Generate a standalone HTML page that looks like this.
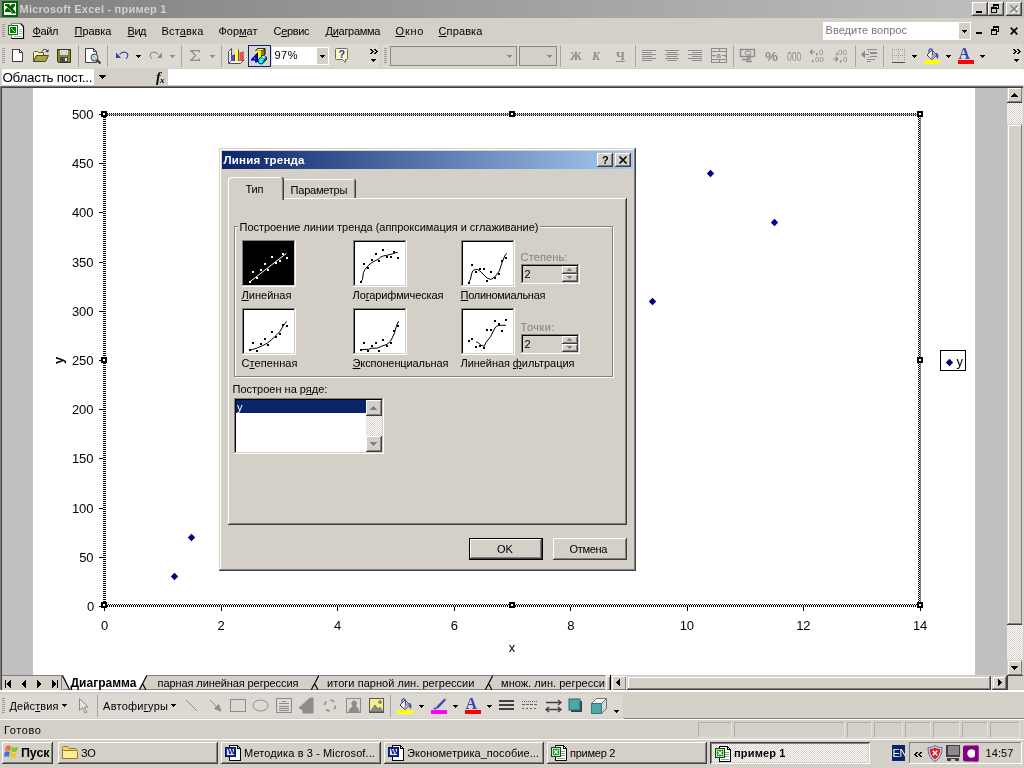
<!DOCTYPE html>
<html lang="ru">
<head>
<meta charset="utf-8">
<title>Microsoft Excel - пример 1</title>
<style>
html,body{margin:0;padding:0;width:1024px;height:768px;overflow:hidden;background:#d4d0c8;}
body{position:relative;font-family:"Liberation Sans",sans-serif;font-size:11px;color:#000;}
.a{position:absolute;box-sizing:border-box;}
.t{position:absolute;white-space:pre;line-height:1;will-change:opacity;font-family:"Liberation Sans",sans-serif;color:#000;}
.t u{text-decoration:underline;text-underline-offset:1px;text-decoration-thickness:1px;}
svg{position:absolute;overflow:visible;}
.raised{background:#d4d0c8;box-shadow:inset -1px -1px #404040,inset 1px 1px #fff,inset -2px -2px #808080,inset 2px 2px #d4d0c8;}
.raised2{background:#d4d0c8;box-shadow:inset -1px -1px #404040,inset 1px 1px #d4d0c8,inset -2px -2px #808080,inset 2px 2px #fff;}
.sunken{box-shadow:inset -1px -1px #fff,inset 1px 1px #808080,inset -2px -2px #d4d0c8,inset 2px 2px #404040;}
.sunkenb{box-shadow:inset -1px -1px #fff,inset 1px 1px #808080,inset -2px -2px #d4d0c8,inset 2px 2px #000;}
.sbv{background:#d4d0c8;box-shadow:inset -1px 0 #d4d0c8,inset 0 -1px #404040,inset 1px 1px #d4d0c8,inset -2px -2px #808080,inset 2px 2px #fff;}
.sunk1{box-shadow:inset -1px -1px #fff,inset 1px 1px #808080;}
.checker{background-color:#fff;background-image:conic-gradient(#d4d0c8 25%,#fff 0 50%,#d4d0c8 0 75%,#fff 0);background-size:2px 2px;}
.grip{background-image:linear-gradient(#a09c94 1px,transparent 1px);background-size:3px 2px;}
.sep{width:1px;background:#a6a398;}
</style>
</head>
<body>
<!-- ===== Excel title bar (inactive) ===== -->
<div class="a" style="left:0;top:0;width:1024px;height:18px;background:linear-gradient(to right,#808080,#c0c0c0);"></div>
<svg style="left:2px;top:1px" width="16" height="16" viewBox="0 0 16 16">
  <rect x="0" y="0" width="16" height="16" fill="#006400"/>
  <rect x="2" y="2" width="12" height="12" fill="#fff"/>
  <path d="M3 3 H7 L8.500 5 L10 3 H13 V5 L10.800 7.500 L13 10 V11.500 H14 V12.500 H9.500 L8.500 11 H3 V9 L5.500 6.500 L3 4.500 Z" fill="#006400"/>
  <path d="M4.300 5.300 L10.500 11.500" stroke="#fff" stroke-width="0.900" stroke-dasharray="1 0.500"/>
</svg>
<span class="t" style="left:19.56px;top:4.00px;font-size:11px;letter-spacing:0.221px;font-weight:bold;color:#d4d0c8;">Microsoft Excel - пример 1</span>
<!-- caption buttons -->
<div class="a raised" style="left:972px;top:2px;width:16px;height:14px;"></div>
<div class="a" style="left:976px;top:11px;width:6px;height:2px;background:#000;"></div>
<div class="a raised" style="left:988px;top:2px;width:16px;height:14px;"></div>
<svg style="left:988px;top:2px" width="16" height="14" viewBox="0 0 16 14" shape-rendering="crispEdges">
  <path d="M5 2h6v2h-6z M5 4h1v1h-1z M10 4h1v3h-1z M9 6h1v1h-1z" fill="#000"/>
  <path d="M3 5h6v2h-6z M3 7h1v4h-1z M8 7h1v4h-1z M3 10h6v1h-6z" fill="#000"/>
</svg>
<div class="a raised" style="left:1006px;top:2px;width:16px;height:14px;"></div>
<svg style="left:1006px;top:2px" width="16" height="14" viewBox="0 0 16 14">
  <path d="M5.5 4.5 L12.5 11.5 M12.5 4.5 L5.5 11.5" stroke="#fff" stroke-width="1.6" fill="none"/>
  <path d="M4.5 3.5 L11.5 10.5 M11.5 3.5 L4.5 10.5" stroke="#808080" stroke-width="1.6" fill="none"/>
</svg>

<!-- ===== Menu bar ===== -->
<div class="a" style="left:0;top:18px;width:1024px;height:26px;background:#d4d0c8;"></div>
<div class="a grip" style="left:2px;top:24px;width:3px;height:14px;"></div>
<!-- document icon -->
<svg style="left:8px;top:23px" width="17" height="17" viewBox="8 23 17 17">
  <path d="M11.500 23.500 H20.500 L23.500 26.500 V38.500 H11.500 Z" fill="#fff" stroke="#808080" stroke-width="1"/>
  <path d="M20.500 23.500 L23.500 26.500 V38.500 H11.500" fill="none" stroke="#000" stroke-width="1.200"/>
  <path d="M19 29.500H22 M19 31.500H22 M19 33.500H22 M14 36.500H22" stroke="#b0b0b0" stroke-width="1"/>
  <rect x="8" y="25" width="10" height="10" fill="#008000"/>
  <rect x="9.500" y="26.500" width="7" height="7" fill="none" stroke="#fff" stroke-width="1"/>
  <path d="M10.800 27.800 L15.200 32.200" stroke="#d8f0d8" stroke-width="1"/>
</svg>
<span class="t" style="left:32.56px;top:26.00px;font-size:11px;letter-spacing:-0.394px;"><u>Ф</u>айл</span>
<span class="t" style="left:74.56px;top:26.00px;font-size:11px;letter-spacing:-0.058px;"><u>П</u>равка</span>
<span class="t" style="left:127.56px;top:26.00px;font-size:11px;letter-spacing:-0.521px;"><u>В</u>ид</span>
<span class="t" style="left:161.56px;top:26.00px;font-size:11px;letter-spacing:0.162px;">Вст<u>а</u>вка</span>
<span class="t" style="left:218.56px;top:26.00px;font-size:11px;letter-spacing:-0.043px;">Фор<u>м</u>ат</span>
<span class="t" style="left:273.56px;top:26.00px;font-size:11px;letter-spacing:-0.361px;">С<u>е</u>рвис</span>
<span class="t" style="left:325.56px;top:26.00px;font-size:11px;letter-spacing:-0.292px;">Д<u>и</u>аграмма</span>
<span class="t" style="left:395.56px;top:26.00px;font-size:11px;letter-spacing:0.767px;"><u>О</u>кно</span>
<span class="t" style="left:438.56px;top:26.00px;font-size:11px;letter-spacing:0.118px;"><u>С</u>правка</span>
<!-- ask-a-question box -->
<div class="a" style="left:823px;top:22px;width:148px;height:18px;background:#fff;"></div>
<span class="t" style="left:825.56px;top:25.00px;font-size:11px;letter-spacing:0.020px;color:#787878;">Введите вопрос</span>
<div class="a" style="left:959px;top:23px;width:11px;height:16px;background:#d4d0c8;"></div>
<svg style="left:962px;top:30px" width="5" height="3" viewBox="0 0 5 3" shape-rendering="crispEdges"><path d="M0 0h5v1h-5zM1 1h3v1h-3zM2 2h1v1h-1z" fill="#000"/></svg>
<!-- MDI buttons -->
<div class="a" style="left:976px;top:32px;width:6px;height:2px;background:#000;"></div>
<svg style="left:990px;top:25px" width="10" height="11" viewBox="0 0 10 11" shape-rendering="crispEdges">
  <path d="M3 1h6v2h-6z M3 3h1v1h-1z M8 3h1v4h-1z M7 6h1v1h-1z" fill="#000"/>
  <path d="M1 4h6v2h-6z M1 6h1v4h-1z M6 6h1v4h-1z M1 9h6v1h-6z" fill="#000"/>
</svg>
<svg style="left:1010px;top:27px" width="8" height="8" viewBox="0 0 8 8"><path d="M0.7 0.7 L7.3 7.3 M7.3 0.7 L0.7 7.3" stroke="#000" stroke-width="1.7" fill="none"/></svg>
<!-- ===== Standard toolbar ===== -->
<div class="a" style="left:0;top:44px;width:380px;height:24px;background:#dcd9d2;border-radius:0 3px 3px 0;"></div>
<div class="a grip" style="left:2px;top:48px;width:3px;height:16px;"></div>
<!-- new -->
<svg style="left:12px;top:49px" width="11" height="13" viewBox="0 0 11 13" shape-rendering="crispEdges">
  <path d="M0.5 0.5 H7.5 L10.5 3.5 V12.5 H0.5 Z" fill="#fff" stroke="#404040"/>
  <path d="M7.5 0.5 V3.5 H10.5" fill="none" stroke="#404040"/>
</svg>
<!-- open -->
<svg style="left:33px;top:48px" width="17" height="14" viewBox="0 0 17 14">
  <path d="M9 3.500 C10 0.800 13 0.500 14.500 3" fill="none" stroke="#404040" stroke-width="1"/>
  <path d="M15.800 1.200 L15.300 4.600 L12.300 3.600 Z" fill="#404040"/>
  <path d="M0.500 13.500 V4.500 L1.500 3.500 H4.500 L5.500 4.500 H10.500 V7.500 H3.500 Z" fill="#fbf8b0" stroke="#5a5a2a" stroke-width="1"/>
  <path d="M0.500 13.500 L3.500 7.500 H15.500 L12.500 13.500 Z" fill="#a8a44a" stroke="#4a4a20" stroke-width="1"/>
</svg>
<!-- save -->
<svg style="left:57px;top:49px" width="15" height="14" viewBox="0 0 15 14" shape-rendering="crispEdges">
  <path d="M0.5 0.5 H13.5 V13.5 H1.5 L0.5 12.5 Z" fill="#8a8638" stroke="#3c3a14"/>
  <rect x="3" y="1" width="8" height="5" fill="#d8d8d8"/>
  <rect x="3" y="8" width="8" height="5" fill="#4a4a4a"/>
  <rect x="8" y="9" width="2" height="3" fill="#e8e8e8"/>
</svg>
<div class="a sep" style="left:78px;top:45px;height:22px;"></div>
<!-- print preview -->
<svg style="left:85px;top:48px" width="17" height="16" viewBox="0 0 17 16">
  <path d="M0.5 0.5 H8.5 L11.5 3.5 V14.5 H0.5 Z" fill="#fff" stroke="#404040" stroke-width="1"/>
  <path d="M8.5 0.5 V3.5 H11.5" fill="none" stroke="#404040" stroke-width="1"/>
  <circle cx="9.5" cy="9.5" r="3.3" fill="#d0d4d8" stroke="#606060" stroke-width="1.2"/>
  <rect x="8" y="8" width="1.500" height="1.500" fill="#30e0f0"/><rect x="10" y="10" width="1.500" height="1.500" fill="#30e0f0"/>
  <path d="M12 12 L15.5 15.500" stroke="#303030" stroke-width="2"/>
</svg>
<div class="a sep" style="left:107px;top:45px;height:22px;"></div>
<!-- undo -->
<svg style="left:0;top:44px" width="200" height="24" viewBox="0 44 200 24">
  <path d="M116 52.500 V58 H121 Z" fill="#3838a8"/>
  <path d="M119.500 54.500 C121.500 52.200 124 51.800 126 52.500 C128.300 53.500 128.500 56.500 126 58.800" fill="none" stroke="#3838a8" stroke-width="1.100"/>
</svg>
<svg style="left:136px;top:55px" width="5" height="3" viewBox="0 0 5 3" shape-rendering="crispEdges"><path d="M0 0h5v1h-5zM1 1h3v1h-3zM2 2h1v1h-1z" fill="#000"/></svg>
<!-- redo (disabled) -->
<svg style="left:0;top:44px" width="200" height="24" viewBox="0 44 200 24">
  <path d="M162 52.500 V58 H157 Z" fill="#8c8c8c"/>
  <path d="M158.500 54.500 C156.500 52.200 154 51.800 152 52.500 C149.700 53.500 149.500 56.500 152 58.800" fill="none" stroke="#8c8c8c" stroke-width="1.100"/>
</svg>
<svg style="left:170px;top:55px" width="5" height="3" viewBox="0 0 5 3" shape-rendering="crispEdges"><path d="M0 0h5v1h-5zM1 1h3v1h-3zM2 2h1v1h-1z" fill="#8c8c8c"/></svg>
<div class="a sep" style="left:181px;top:45px;height:22px;"></div>
<!-- autosum (disabled) -->
<svg style="left:190px;top:50px" width="11" height="11" viewBox="0 0 11 11">
  <path d="M9.5 2.5 V0.7 H1 L5.5 5.5 L1 10.3 H9.5 V8.5" fill="none" stroke="#8c8c8c" stroke-width="1.3"/>
</svg>
<svg style="left:210px;top:55px" width="5" height="3" viewBox="0 0 5 3" shape-rendering="crispEdges"><path d="M0 0h5v1h-5zM1 1h3v1h-3zM2 2h1v1h-1z" fill="#8c8c8c"/></svg>
<div class="a sep" style="left:221px;top:45px;height:22px;"></div>
<!-- chart wizard -->
<svg style="left:224px;top:44px" width="56" height="24" viewBox="224 44 56 24">
  <path d="M228.500 51.500 L231.500 48.500 V60.500 H243.500 L240.500 63.500 H228.500 Z" fill="#f0f0f0" stroke="#505050" stroke-width="1"/>
  <path d="M231.500 60.500 L228.500 63.500" stroke="#505050" stroke-width="1"/>
  <rect x="231" y="55" width="3" height="6" fill="#4848f8"/><rect x="234" y="54.500" width="1" height="6.500" fill="#404080"/>
  <rect x="235" y="50" width="3" height="11" fill="#ffff40"/><rect x="238" y="49.500" width="1" height="11.500" fill="#606020"/>
  <rect x="239.500" y="52" width="3" height="9" fill="#ff4848"/><rect x="242.500" y="51.500" width="1" height="9.500" fill="#703030"/>
</svg>
<!-- drawing (checked) -->
<div class="a" style="left:248px;top:45px;width:23px;height:22px;background:#d5d6da;border:1px solid #0a246a;"></div>
<svg style="left:224px;top:44px" width="56" height="24" viewBox="224 44 56 24">
  <path d="M255.500 50.500 L258 48.500 H265 V54.500 L262.500 56.500 Z" fill="#808000" stroke="#000" stroke-width="1"/>
  <path d="M255.500 50.500 L258 48.500 H265 L262.500 50.500 Z" fill="#f8f8d0" stroke="#000" stroke-width="0.600"/>
  <rect x="255.500" y="50.500" width="5.500" height="6" fill="#ffff00"/>
  <path d="M250.800 59.500 L257 52.800 V62.500 H255 V60.500 H252.800 L251.800 61.200 Z" fill="#0000d0"/>
  <path d="M254 58.800 H255.300 V57.300 Z" fill="#d5d6da"/>
  <path d="M257.500 52.500 V62" stroke="#000" stroke-width="1"/>
  <path d="M258 60 L262.500 55.500 L266.500 57 L266.500 59.500 L262 64 L259 63.500 Z" fill="#00ffff" stroke="#000" stroke-width="0.800"/>
  <path d="M261 57.500 L263 55.500 L266.500 57 L264.500 59 Z" fill="#e8e8e8" stroke="#404040" stroke-width="0.500"/>
  <path d="M264.500 59 L266.500 57 V59.500 L262.500 63.800 Z" fill="#008080" stroke="#000" stroke-width="0.500"/>
</svg>
<!-- zoom box -->
<div class="a" style="left:272px;top:47px;width:57px;height:18px;background:#fff;"></div>
<span class="t" style="left:274.56px;top:50.00px;font-size:11px;letter-spacing:0.424px;">97%</span>
<div class="a" style="left:317px;top:48px;width:11px;height:16px;background:#d4d0c8;"></div>
<svg style="left:320px;top:55px" width="5" height="3" viewBox="0 0 5 3" shape-rendering="crispEdges"><path d="M0 0h5v1h-5zM1 1h3v1h-3zM2 2h1v1h-1z" fill="#000"/></svg>
<!-- help -->
<svg style="left:335px;top:48px" width="14" height="16" viewBox="0 0 14 16">
  <path d="M1.5 0.5 H11.5 Q12.5 0.5 12.5 1.5 V10.5 Q12.5 11.5 11.5 11.5 H10.5 V14.5 L7.5 11.5 H1.5 Q0.5 11.5 0.5 10.5 V1.5 Q0.5 0.5 1.5 0.5 Z" fill="#fbf7c0" stroke="#6a6a6a" stroke-width="1"/>
</svg>
<span class="t" style="left:338.5px;top:49.00px;font-size:11px;font-weight:bold;color:#2a2ab0;">?</span>
<!-- toolbar options -->
<svg style="left:370px;top:49px" width="8" height="14" viewBox="0 0 8 14" shape-rendering="crispEdges">
  <path d="M0 0h2v1h-2zM1 1h2v1h-2zM2 2h2v1h-2zM1 3h2v1h-2zM0 4h2v1h-2z M4 0h2v1h-2zM5 1h2v1h-2zM6 2h2v1h-2zM5 3h2v1h-2zM4 4h2v1h-2z" fill="#000"/>
  <path d="M1 10h5v1h-5zM2 11h3v1h-3zM3 12h1v1h-1z" fill="#000"/>
</svg>

<!-- ===== Formatting toolbar ===== -->
<div class="a" style="left:382px;top:44px;width:641px;height:24px;background:#dcd9d2;border-radius:3px;"></div>
<div class="a grip" style="left:384px;top:48px;width:3px;height:16px;"></div>
<div class="a" style="left:390px;top:46px;width:127px;height:20px;background:#d4d0c8;border:1px solid #8a8884;"></div>
<svg style="left:507px;top:55px" width="5" height="3" viewBox="0 0 5 3" shape-rendering="crispEdges"><path d="M0 0h5v1h-5zM1 1h3v1h-3zM2 2h1v1h-1z" fill="#8c8c8c"/></svg>
<div class="a" style="left:519px;top:46px;width:38px;height:20px;background:#d4d0c8;border:1px solid #8a8884;"></div>
<svg style="left:547px;top:55px" width="5" height="3" viewBox="0 0 5 3" shape-rendering="crispEdges"><path d="M0 0h5v1h-5zM1 1h3v1h-3zM2 2h1v1h-1z" fill="#8c8c8c"/></svg>
<div class="a sep" style="left:560px;top:45px;height:22px;"></div>
<span class="t" style="left:570px;top:50.00px;font-size:12px;font-family:'Liberation Serif',serif;font-weight:bold;color:#8c8c8c;">Ж</span>
<span class="t" style="left:592px;top:50.00px;font-size:12px;font-family:'Liberation Serif',serif;font-weight:bold;font-style:italic;color:#8c8c8c;">К</span>
<span class="t" style="left:616px;top:50.00px;font-size:12px;font-family:'Liberation Serif',serif;font-weight:bold;color:#8c8c8c;"><u>Ч</u></span>
<div class="a sep" style="left:635px;top:45px;height:22px;"></div>
<!-- align left/center/right -->
<svg style="left:642px;top:50px" width="14" height="11" viewBox="0 0 14 11" shape-rendering="crispEdges"><path d="M0 0h14v1h-14zM0 2h10v1h-10zM0 4h14v1h-14zM0 6h10v1h-10zM0 8h14v1h-14zM0 10h10v1h-10z" fill="#8c8c8c"/></svg>
<svg style="left:665px;top:50px" width="14" height="11" viewBox="0 0 14 11" shape-rendering="crispEdges"><path d="M0 0h14v1h-14zM2 2h10v1h-10zM0 4h14v1h-14zM2 6h10v1h-10zM0 8h14v1h-14zM2 10h10v1h-10z" fill="#8c8c8c"/></svg>
<svg style="left:688px;top:50px" width="14" height="11" viewBox="0 0 14 11" shape-rendering="crispEdges"><path d="M0 0h14v1h-14zM4 2h10v1h-10zM0 4h14v1h-14zM4 6h10v1h-10zM0 8h14v1h-14zM4 10h10v1h-10z" fill="#8c8c8c"/></svg>
<!-- merge and center -->
<svg style="left:711px;top:48px" width="16" height="15" viewBox="0 0 16 15" shape-rendering="crispEdges">
  <path d="M0.5 0.5H15.5V14.5H0.5Z M0.5 3.5H15.5 M0.5 11.5H15.5 M8 0.5V3.5 M8 11.5V14.5" fill="none" stroke="#8c8c8c"/>
  <path d="M1 7.5H5 M11 7.5H15 M2 6.5V8.5 M14 6.5V8.5" stroke="#8c8c8c"/>
</svg>
<span class="t" style="left:716.5px;top:52.00px;font-size:8px;color:#8c8c8c;font-weight:bold;">a</span>
<div class="a sep" style="left:733px;top:45px;height:22px;"></div>
<!-- currency -->
<svg style="left:740px;top:49px" width="16" height="14" viewBox="0 0 16 14">
  <rect x="0.5" y="0.5" width="14" height="7" fill="none" stroke="#8c8c8c" stroke-width="1.4"/>
  <ellipse cx="8" cy="4" rx="3" ry="2" fill="none" stroke="#8c8c8c"/>
  <path d="M2 10.5H8 M8 8V13 M6 12.5H12 M10 6V11" stroke="#8c8c8c" stroke-width="1.5" fill="none"/>
</svg>
<span class="t" style="left:764.5px;top:50.00px;font-size:13px;color:#8c8c8c;font-weight:bold;transform:scaleX(1.12);transform-origin:0 50%;">%</span>
<span class="t" style="left:786.5px;top:51.00px;font-size:12px;color:#8c8c8c;transform:scaleX(.72);transform-origin:0 50%;">000</span>
<svg style="left:810px;top:49px" width="15" height="14" viewBox="0 0 15 14"><path d="M0 3H5 M0 3 L2.5 0.8 M0 3 L2.5 5.2" stroke="#8c8c8c" stroke-width="1.2" fill="none"/><rect x="6" y="4" width="1.4" height="2.5" fill="#8c8c8c"/><rect x="2" y="11" width="1.4" height="2.5" fill="#8c8c8c"/></svg>
<span class="t" style="left:819px;top:49.00px;font-size:8px;color:#8c8c8c;">0</span>
<span class="t" style="left:815px;top:56.00px;font-size:8px;color:#8c8c8c;">00</span>
<svg style="left:833px;top:49px" width="15" height="14" viewBox="0 0 15 14"><path d="M0 10H5 M5 10 L2.5 7.8 M5 10 L2.5 12.2" stroke="#8c8c8c" stroke-width="1.2" fill="none"/><rect x="3" y="4" width="1.4" height="2.5" fill="#8c8c8c"/><rect x="7" y="11" width="1.4" height="2.5" fill="#8c8c8c"/></svg>
<span class="t" style="left:838px;top:49.00px;font-size:8px;color:#8c8c8c;">00</span>
<span class="t" style="left:843px;top:56.00px;font-size:8px;color:#8c8c8c;">0</span>
<div class="a sep" style="left:855px;top:45px;height:22px;"></div>
<!-- decrease indent -->
<svg style="left:861px;top:48px" width="17" height="15" viewBox="0 0 17 15" shape-rendering="crispEdges">
  <path d="M6 1h10v1h-10zM9 4h7v2h-7zM9 8h7v1h-7zM6 11h8v1h-8zM6 13h4v1h-4z M7 3h1v1h-1z M7 6h1v1h-1zM7 9h1v1h-1z" fill="#8c8c8c"/>
  <path d="M0 6h7v1h-7z M1 5h1v3h-1z M2 4h1v5h-1z M3 3h1v7h-1z" fill="#8c8c8c"/>
</svg>
<div class="a sep" style="left:883px;top:45px;height:22px;"></div>
<!-- borders -->
<svg style="left:892px;top:49px" width="13" height="14" viewBox="0 0 13 14" shape-rendering="crispEdges">
  <path d="M0 0h1v1h-1zM2 0h1v1h-1zM4 0h1v1h-1zM6 0h1v1h-1zM8 0h1v1h-1zM10 0h1v1h-1zM12 0h1v1h-1z M0 2h1v1h-1zM6 2h1v1h-1zM12 2h1v1h-1z M0 4h1v1h-1zM6 4h1v1h-1zM12 4h1v1h-1z M0 6h1v1h-1zM2 6h1v1h-1zM4 6h1v1h-1zM6 6h1v1h-1zM8 6h1v1h-1zM10 6h1v1h-1zM12 6h1v1h-1z M0 8h1v1h-1zM6 8h1v1h-1zM12 8h1v1h-1z M0 10h1v1h-1zM6 10h1v1h-1zM12 10h1v1h-1z" fill="#9a9a9a"/>
  <rect x="0" y="12.500" width="13" height="1.200" fill="#505050"/>
</svg>
<svg style="left:912px;top:55px" width="5" height="3" viewBox="0 0 5 3" shape-rendering="crispEdges"><path d="M0 0h5v1h-5zM1 1h3v1h-3zM2 2h1v1h-1z" fill="#000"/></svg>
<!-- fill colour -->
<svg style="left:924px;top:47px" width="17" height="17" viewBox="0 0 17 17">
  <path d="M3 8 L8 3 L13 8 L8 13 Z" fill="#f4f4f4" stroke="#444" stroke-width="1"/><path d="M8 8 L10.500 5.500 L13 8 L8 13 L6.500 11.500 Z" fill="#a8a8a8"/>
  <path d="M5 5.5 C4 1 8.5 0.5 8.5 4.5 V8" fill="none" stroke="#3a46b8" stroke-width="1.2"/>
  <path d="M12 6 C14 6.5 14.5 9 13.5 11.5 C12.5 10 12.5 8 12 6Z" fill="#3a46b8" stroke="#3a46b8" stroke-width="0.8"/>
  <rect x="0" y="13" width="16" height="4" fill="#ffff00"/>
</svg>
<svg style="left:946px;top:55px" width="5" height="3" viewBox="0 0 5 3" shape-rendering="crispEdges"><path d="M0 0h5v1h-5zM1 1h3v1h-3zM2 2h1v1h-1z" fill="#000"/></svg>
<!-- font colour -->
<span class="t" style="left:958.5px;top:46.00px;font-size:16px;font-family:'Liberation Serif',serif;font-weight:bold;color:#3a46b8;">A</span>
<div class="a" style="left:958px;top:60px;width:16px;height:4px;background:#ff0000;"></div>
<svg style="left:980px;top:55px" width="5" height="3" viewBox="0 0 5 3" shape-rendering="crispEdges"><path d="M0 0h5v1h-5zM1 1h3v1h-3zM2 2h1v1h-1z" fill="#000"/></svg>
<svg style="left:1013px;top:49px" width="8" height="14" viewBox="0 0 8 14" shape-rendering="crispEdges">
  <path d="M0 0h2v1h-2zM1 1h2v1h-2zM2 2h2v1h-2zM1 3h2v1h-2zM0 4h2v1h-2z M4 0h2v1h-2zM5 1h2v1h-2zM6 2h2v1h-2zM5 3h2v1h-2zM4 4h2v1h-2z" fill="#000"/>
  <path d="M1 10h5v1h-5zM2 11h3v1h-3zM3 12h1v1h-1z" fill="#000"/>
</svg>
<!-- ===== Formula bar ===== -->
<div class="a" style="left:0;top:68px;width:1024px;height:18px;background:#d4d0c8;"></div>
<div class="a" style="left:2px;top:69px;width:92px;height:16px;background:#fff;"></div>
<span class="t" style="left:2.464px;top:71.00px;font-size:13.4px;letter-spacing:-0.244px;">Область пост...</span>
<svg style="left:99px;top:75px" width="7" height="4" viewBox="0 0 7 4" shape-rendering="crispEdges"><path d="M0 0h7v1h-7zM1 1h5v1h-5zM2 2h3v1h-3zM3 3h1v1h-1z" fill="#000"/></svg>
<span class="t" style="left:156px;top:71.00px;font-size:14px;font-family:'Liberation Serif',serif;font-style:italic;font-weight:bold;">f</span>
<span class="t" style="left:160px;top:76.00px;font-size:9px;font-family:'Liberation Serif',serif;font-style:italic;font-weight:bold;">x</span>
<div class="a" style="left:168px;top:69px;width:856px;height:16px;background:#fff;"></div>
<!-- ===== Workbook client area ===== -->
<div class="a" style="left:2px;top:88px;width:31px;height:587px;background:#c0c0c0;"></div>
<div class="a" style="left:33px;top:88px;width:942px;height:587px;background:#fff;"></div>
<div class="a" style="left:975px;top:88px;width:32px;height:587px;background:#c0c0c0;"></div>
<!-- vertical scrollbar -->
<div class="a checker" style="left:1007px;top:88px;width:16px;height:588px;"></div>
<div class="a sbv" style="left:1007px;top:87px;width:16px;height:16px;"></div>
<svg style="left:1011px;top:93px" width="7" height="4" viewBox="0 0 7 4" shape-rendering="crispEdges"><path d="M3 0h1v1h-1zM2 1h3v1h-3zM1 2h5v1h-5zM0 3h7v1h-7z" fill="#000"/></svg>
<div class="a sbv" style="left:1007px;top:124px;width:16px;height:501px;"></div>
<div class="a sbv" style="left:1007px;top:660px;width:16px;height:16px;"></div>
<svg style="left:1011px;top:666px" width="7" height="4" viewBox="0 0 7 4" shape-rendering="crispEdges"><path d="M0 0h7v1h-7zM1 1h5v1h-5zM2 2h3v1h-3zM3 3h1v1h-1z" fill="#000"/></svg>
<div class="a" style="left:0;top:86px;width:1023px;height:1px;background:#707070;"></div>
<div class="a" style="left:1px;top:87px;width:1022px;height:1px;background:#404040;"></div>
<div class="a" style="left:0;top:86px;width:1px;height:605px;background:#808080;"></div>
<div class="a" style="left:1px;top:87px;width:1px;height:603px;background:#404040;"></div>
<!-- ===== Chart ===== -->
<svg style="left:0;top:0" width="1024" height="768" viewBox="0 0 1024 768" shape-rendering="crispEdges"><rect x="99" y="114" width="4" height="1" fill="#000"/><rect x="99" y="163" width="4" height="1" fill="#000"/><rect x="99" y="212" width="4" height="1" fill="#000"/><rect x="99" y="262" width="4" height="1" fill="#000"/><rect x="99" y="311" width="4" height="1" fill="#000"/><rect x="99" y="360" width="4" height="1" fill="#000"/><rect x="99" y="409" width="4" height="1" fill="#000"/><rect x="99" y="458" width="4" height="1" fill="#000"/><rect x="99" y="508" width="4" height="1" fill="#000"/><rect x="99" y="557" width="4" height="1" fill="#000"/><rect x="99" y="606" width="4" height="1" fill="#000"/><rect x="104" y="607" width="1" height="4" fill="#000"/><rect x="221" y="607" width="1" height="4" fill="#000"/><rect x="337" y="607" width="1" height="4" fill="#000"/><rect x="454" y="607" width="1" height="4" fill="#000"/><rect x="570" y="607" width="1" height="4" fill="#000"/><rect x="687" y="607" width="1" height="4" fill="#000"/><rect x="803" y="607" width="1" height="4" fill="#000"/><rect x="920" y="607" width="1" height="4" fill="#000"/></svg>
<div class="a" style="left:103px;top:113px;width:818px;height:3px;background:repeating-linear-gradient(to right,#000 0 1px,#fff 1px 2px);"></div>
<div class="a" style="left:106px;top:114px;width:815px;height:1px;background:#808080;"></div>
<div class="a" style="left:103px;top:604px;width:818px;height:1px;background:repeating-linear-gradient(to right,#fff 0 1px,#000 1px 2px);"></div>
<div class="a" style="left:103px;top:605px;width:818px;height:2px;background:repeating-linear-gradient(to right,#000 0 1px,#fff 1px 2px);"></div>
<div class="a" style="left:103px;top:113px;width:3px;height:494px;background:repeating-linear-gradient(to bottom,#000 0 1px,#fff 1px 2px);"></div>
<div class="a" style="left:918px;top:116px;width:2px;height:488px;background-color:#fff;background-image:conic-gradient(#000 25%,#fff 0 50%,#000 0 75%,#fff 0);background-size:2px 2px;"></div>
<div class="a" style="left:920px;top:116px;width:1px;height:488px;background:#808080;"></div>
<div class="a" style="left:101px;top:111px;width:6px;height:6px;background:#000;"></div>
<div class="a" style="left:103px;top:113px;width:2px;height:2px;background:#fff;"></div>
<div class="a" style="left:509px;top:111px;width:6px;height:6px;background:#000;"></div>
<div class="a" style="left:511px;top:113px;width:2px;height:2px;background:#fff;"></div>
<div class="a" style="left:917px;top:111px;width:6px;height:6px;background:#000;"></div>
<div class="a" style="left:919px;top:113px;width:2px;height:2px;background:#fff;"></div>
<div class="a" style="left:101px;top:357px;width:6px;height:6px;background:#000;"></div>
<div class="a" style="left:103px;top:359px;width:2px;height:2px;background:#fff;"></div>
<div class="a" style="left:917px;top:357px;width:6px;height:6px;background:#000;"></div>
<div class="a" style="left:919px;top:359px;width:2px;height:2px;background:#fff;"></div>
<div class="a" style="left:101px;top:602px;width:6px;height:6px;background:#000;"></div>
<div class="a" style="left:103px;top:604px;width:2px;height:2px;background:#fff;"></div>
<div class="a" style="left:509px;top:602px;width:6px;height:6px;background:#000;"></div>
<div class="a" style="left:511px;top:604px;width:2px;height:2px;background:#fff;"></div>
<div class="a" style="left:917px;top:602px;width:6px;height:6px;background:#000;"></div>
<div class="a" style="left:919px;top:604px;width:2px;height:2px;background:#fff;"></div>
<span class="t" style="left:71.98px;top:108.00px;font-size:13px;letter-spacing:-0.082px;">500</span>
<span class="t" style="left:71.98px;top:157.00px;font-size:13px;letter-spacing:-0.082px;">450</span>
<span class="t" style="left:71.98px;top:206.00px;font-size:13px;letter-spacing:-0.082px;">400</span>
<span class="t" style="left:71.98px;top:256.00px;font-size:13px;letter-spacing:-0.082px;">350</span>
<span class="t" style="left:71.98px;top:305.00px;font-size:13px;letter-spacing:-0.082px;">300</span>
<span class="t" style="left:71.98px;top:354.00px;font-size:13px;letter-spacing:-0.082px;">250</span>
<span class="t" style="left:71.98px;top:403.00px;font-size:13px;letter-spacing:-0.082px;">200</span>
<span class="t" style="left:71.98px;top:452.00px;font-size:13px;letter-spacing:-0.082px;">150</span>
<span class="t" style="left:71.98px;top:502.00px;font-size:13px;letter-spacing:-0.082px;">100</span>
<span class="t" style="left:79.18px;top:551.00px;font-size:13px;letter-spacing:-0.129px;">50</span>
<span class="t" style="left:87px;top:600.00px;font-size:13px;">0</span>
<span class="t" style="left:101px;top:619.00px;font-size:13px;">0</span>
<span class="t" style="left:217.6px;top:619.00px;font-size:13px;">2</span>
<span class="t" style="left:334.1px;top:619.00px;font-size:13px;">4</span>
<span class="t" style="left:450.7px;top:619.00px;font-size:13px;">6</span>
<span class="t" style="left:567.3px;top:619.00px;font-size:13px;">8</span>
<span class="t" style="left:679.68px;top:619.00px;font-size:13px;letter-spacing:-0.129px;">10</span>
<span class="t" style="left:796.28px;top:619.00px;font-size:13px;letter-spacing:-0.129px;">12</span>
<span class="t" style="left:912.88px;top:619.00px;font-size:13px;letter-spacing:-0.229px;">14</span>
<span class="t" style="left:508.7px;top:641.00px;font-size:13px;">x</span>
<div class="a" style="left:52px;top:354px;width:13px;height:13px;"><span class="t" style="left:0;top:0;font-size:13px;font-weight:bold;transform:rotate(-90deg);transform-origin:6.5px 6.5px;width:13px;height:13px;text-align:center;">y</span></div>
<svg style="left:0;top:0" width="1024" height="768" viewBox="0 0 1024 768"><path d="M174.5 572.8 L178.2 576.5 L174.5 580.2 L170.8 576.5 Z" fill="#000080"/><path d="M191.5 533.8 L195.2 537.5 L191.5 541.2 L187.8 537.5 Z" fill="#000080"/><path d="M652.5 297.8 L656.2 301.5 L652.5 305.2 L648.8 301.5 Z" fill="#000080"/><path d="M710.5 169.8 L714.2 173.5 L710.5 177.2 L706.8 173.5 Z" fill="#000080"/><path d="M774.5 218.8 L778.2 222.5 L774.5 226.2 L770.8 222.5 Z" fill="#000080"/></svg>
<div class="a" style="left:940px;top:350px;width:26px;height:21px;border:1px solid #000;background:#fff;"></div>
<svg style="left:0;top:0" width="1024" height="768" viewBox="0 0 1024 768"><path d="M949.5 358.800 L953.200 362.500 L949.500 366.200 L945.800 362.500 Z" fill="#000080"/></svg>
<span class="t" style="left:956.5px;top:355.00px;font-size:13px;">y</span>
<!-- ===== Trendline dialog ===== -->
<div class="a" style="left:219px;top:148px;width:417px;height:423px;background:#d4d0c8;box-shadow:inset -1px -1px #404040,inset 1px 1px #d4d0c8,inset -2px -2px #808080,inset 2px 2px #fff;"></div>
<div class="a" style="left:222px;top:151px;width:411px;height:18px;background:linear-gradient(to right,#0a246a,#a6caf0);"></div>
<span class="t" style="left:223.54px;top:155.00px;font-size:11.5px;letter-spacing:0.196px;font-weight:bold;color:#fff;">Линия тренда</span>
<div class="a raised" style="left:597px;top:153px;width:16px;height:14px;"></div>
<span class="t" style="left:602px;top:155.00px;font-size:11px;font-weight:bold;">?</span>
<div class="a raised" style="left:615px;top:153px;width:16px;height:14px;"></div>
<svg style="left:615px;top:153px" width="16" height="14" viewBox="0 0 16 14"><path d="M4.5 3.5 L11.5 10.5 M11.5 3.5 L4.5 10.5" stroke="#000" stroke-width="1.7" fill="none"/></svg>
<!-- tab page -->
<div class="a" style="left:228px;top:198px;width:399px;height:327px;background:#d4d0c8;box-shadow:inset -1px -1px #404040,inset 1px 1px #fff,inset -2px -2px #808080;"></div>
<!-- tab 2 (Параметры) -->
<div class="a" style="left:284px;top:179px;width:72px;height:19px;background:#d4d0c8;border-radius:2px 2px 0 0;box-shadow:inset -1px 0 #404040,inset 0 1px #fff,inset -2px 0 #808080;"></div>
<span class="t" style="left:290.56px;top:185.00px;font-size:11px;letter-spacing:-0.220px;">Параметры</span>
<!-- tab 1 (Тип) selected -->
<div class="a" style="left:228px;top:177px;width:56px;height:23px;background:#d4d0c8;border-radius:3px 3px 0 0;box-shadow:inset -1px 0 #404040,inset 1px 1px #fff,inset -2px 0 #808080;"></div>
<span class="t" style="left:245.56px;top:184.00px;font-size:11px;letter-spacing:-0.232px;">Тип</span>
<!-- group box -->
<div class="a" style="left:234px;top:226px;width:379px;height:151px;border:1px solid #808080;box-shadow:inset 1px 1px #fff,1px 1px #fff;"></div>
<div class="a" style="left:238px;top:222px;width:302px;height:12px;background:#d4d0c8;"></div>
<span class="t" style="left:239.56px;top:222.00px;font-size:11px;letter-spacing:-0.045px;">Построение линии тренда (аппроксимация и сглаживание)</span>
<div class="a" style="left:242px;top:240px;width:54px;height:47px;background:#000;"></div><svg style="left:242px;top:240px" width="54" height="47" viewBox="0 0 54 47"><rect x="7" y="41" width="2" height="2" fill="#fff" shape-rendering="crispEdges"/><rect x="10" y="31" width="2" height="2" fill="#fff" shape-rendering="crispEdges"/><rect x="14" y="37" width="2" height="2" fill="#fff" shape-rendering="crispEdges"/><rect x="18" y="29" width="2" height="2" fill="#fff" shape-rendering="crispEdges"/><rect x="22" y="23" width="2" height="2" fill="#fff" shape-rendering="crispEdges"/><rect x="25" y="29" width="2" height="2" fill="#fff" shape-rendering="crispEdges"/><rect x="29" y="16" width="2" height="2" fill="#fff" shape-rendering="crispEdges"/><rect x="33" y="22" width="2" height="2" fill="#fff" shape-rendering="crispEdges"/><rect x="37" y="20" width="2" height="2" fill="#fff" shape-rendering="crispEdges"/><rect x="40" y="13" width="2" height="2" fill="#fff" shape-rendering="crispEdges"/><rect x="44" y="17" width="2" height="2" fill="#fff" shape-rendering="crispEdges"/><path d="M7.7 41.9 L44.5 13.3" fill="none" stroke="#fff" stroke-width="1"/></svg><div class="a sunkenb" style="left:242px;top:240px;width:54px;height:47px;"></div>
<div class="a" style="left:353px;top:240px;width:54px;height:47px;background:#fff;"></div><svg style="left:353px;top:240px" width="54" height="47" viewBox="0 0 54 47"><rect x="7" y="41" width="2" height="2" fill="#000" shape-rendering="crispEdges"/><rect x="10" y="23" width="2" height="2" fill="#000" shape-rendering="crispEdges"/><rect x="14" y="27" width="2" height="2" fill="#000" shape-rendering="crispEdges"/><rect x="18" y="19" width="2" height="2" fill="#000" shape-rendering="crispEdges"/><rect x="22" y="13" width="2" height="2" fill="#000" shape-rendering="crispEdges"/><rect x="25" y="20" width="2" height="2" fill="#000" shape-rendering="crispEdges"/><rect x="29" y="9" width="2" height="2" fill="#000" shape-rendering="crispEdges"/><rect x="33" y="16" width="2" height="2" fill="#000" shape-rendering="crispEdges"/><rect x="37" y="16" width="2" height="2" fill="#000" shape-rendering="crispEdges"/><rect x="40" y="11" width="2" height="2" fill="#000" shape-rendering="crispEdges"/><rect x="44" y="17" width="2" height="2" fill="#000" shape-rendering="crispEdges"/><path d="M7.7 41.9 L9.5 39.4 L10.4 32.8 L11.7 29.9 L14.9 25.9 L17.9 23.3 L20.8 21.5 L25.1 19.3 L27.3 17.3 L30.2 16.0 L33.9 15.3 L39.7 13.8 L41.5 13.0 L44.7 12.4" fill="none" stroke="#000" stroke-width="1"/></svg><div class="a sunkenb" style="left:353px;top:240px;width:54px;height:47px;"></div>
<div class="a" style="left:461px;top:240px;width:54px;height:47px;background:#fff;"></div><svg style="left:461px;top:240px" width="54" height="47" viewBox="0 0 54 47"><rect x="7" y="42" width="2" height="2" fill="#000" shape-rendering="crispEdges"/><rect x="10" y="24" width="2" height="2" fill="#000" shape-rendering="crispEdges"/><rect x="14" y="31" width="2" height="2" fill="#000" shape-rendering="crispEdges"/><rect x="18" y="28" width="2" height="2" fill="#000" shape-rendering="crispEdges"/><rect x="22" y="28" width="2" height="2" fill="#000" shape-rendering="crispEdges"/><rect x="25" y="40" width="2" height="2" fill="#000" shape-rendering="crispEdges"/><rect x="29" y="31" width="2" height="2" fill="#000" shape-rendering="crispEdges"/><rect x="33" y="37" width="2" height="2" fill="#000" shape-rendering="crispEdges"/><rect x="37" y="33" width="2" height="2" fill="#000" shape-rendering="crispEdges"/><rect x="40" y="20" width="2" height="2" fill="#000" shape-rendering="crispEdges"/><rect x="44" y="17" width="2" height="2" fill="#000" shape-rendering="crispEdges"/><path d="M7.7 42.8 L9.5 39.0 L10.6 33.9 L11.7 31.0 L13.5 29.7 L16.4 29.5 L19.0 31.0 L25.9 37.9 L29.9 39.5 L33.9 36.8 L38.3 31.0 L41.2 22.2 L43.7 16.0 L45.7 13.3" fill="none" stroke="#000" stroke-width="1"/></svg><div class="a sunkenb" style="left:461px;top:240px;width:54px;height:47px;"></div>
<div class="a" style="left:242px;top:308px;width:54px;height:47px;background:#fff;"></div><svg style="left:242px;top:308px" width="54" height="47" viewBox="0 0 54 47"><rect x="7" y="41" width="2" height="2" fill="#000" shape-rendering="crispEdges"/><rect x="10" y="34" width="2" height="2" fill="#000" shape-rendering="crispEdges"/><rect x="14" y="42" width="2" height="2" fill="#000" shape-rendering="crispEdges"/><rect x="18" y="35" width="2" height="2" fill="#000" shape-rendering="crispEdges"/><rect x="22" y="30" width="2" height="2" fill="#000" shape-rendering="crispEdges"/><rect x="25" y="36" width="2" height="2" fill="#000" shape-rendering="crispEdges"/><rect x="29" y="23" width="2" height="2" fill="#000" shape-rendering="crispEdges"/><rect x="33" y="28" width="2" height="2" fill="#000" shape-rendering="crispEdges"/><rect x="37" y="25" width="2" height="2" fill="#000" shape-rendering="crispEdges"/><rect x="40" y="16" width="2" height="2" fill="#000" shape-rendering="crispEdges"/><rect x="44" y="17" width="2" height="2" fill="#000" shape-rendering="crispEdges"/><path d="M7.7 41.8 L10.6 41.5 L14.9 40.1 L20.8 37.5 L25.1 35.3 L29.5 31.7 L33.9 27.7 L38.3 23.0 L41.2 17.9 L44.5 13.5" fill="none" stroke="#000" stroke-width="1"/></svg><div class="a sunkenb" style="left:242px;top:308px;width:54px;height:47px;"></div>
<div class="a" style="left:353px;top:308px;width:54px;height:47px;background:#fff;"></div><svg style="left:353px;top:308px" width="54" height="47" viewBox="0 0 54 47"><rect x="7" y="41" width="2" height="2" fill="#000" shape-rendering="crispEdges"/><rect x="10" y="34" width="2" height="2" fill="#000" shape-rendering="crispEdges"/><rect x="14" y="42" width="2" height="2" fill="#000" shape-rendering="crispEdges"/><rect x="18" y="37" width="2" height="2" fill="#000" shape-rendering="crispEdges"/><rect x="22" y="34" width="2" height="2" fill="#000" shape-rendering="crispEdges"/><rect x="25" y="42" width="2" height="2" fill="#000" shape-rendering="crispEdges"/><rect x="29" y="31" width="2" height="2" fill="#000" shape-rendering="crispEdges"/><rect x="33" y="37" width="2" height="2" fill="#000" shape-rendering="crispEdges"/><rect x="37" y="34" width="2" height="2" fill="#000" shape-rendering="crispEdges"/><rect x="40" y="22" width="2" height="2" fill="#000" shape-rendering="crispEdges"/><rect x="44" y="17" width="2" height="2" fill="#000" shape-rendering="crispEdges"/><path d="M7.7 41.5 L15.7 41.3 L17.9 40.2 L24.4 40.1 L28.1 38.4 L33.9 36.4 L37.5 33.2 L41.2 25.9 L43.7 17.1 L45.7 13.3" fill="none" stroke="#000" stroke-width="1"/></svg><div class="a sunkenb" style="left:353px;top:308px;width:54px;height:47px;"></div>
<div class="a" style="left:461px;top:308px;width:54px;height:47px;background:#fff;"></div><svg style="left:461px;top:308px" width="54" height="47" viewBox="0 0 54 47"><rect x="7" y="32" width="2" height="2" fill="#000" shape-rendering="crispEdges"/><rect x="10" y="30" width="2" height="2" fill="#000" shape-rendering="crispEdges"/><rect x="14" y="38" width="2" height="2" fill="#000" shape-rendering="crispEdges"/><rect x="18" y="37" width="2" height="2" fill="#000" shape-rendering="crispEdges"/><rect x="22" y="39" width="2" height="2" fill="#000" shape-rendering="crispEdges"/><rect x="25" y="21" width="2" height="2" fill="#000" shape-rendering="crispEdges"/><rect x="29" y="21" width="2" height="2" fill="#000" shape-rendering="crispEdges"/><rect x="33" y="12" width="2" height="2" fill="#000" shape-rendering="crispEdges"/><rect x="37" y="15" width="2" height="2" fill="#000" shape-rendering="crispEdges"/><rect x="40" y="22" width="2" height="2" fill="#000" shape-rendering="crispEdges"/><rect x="44" y="11" width="2" height="2" fill="#000" shape-rendering="crispEdges"/><path d="M15.1 34.0 L16.8 34.3 L20.0 37.2 L23.3 38.3 L25.1 34.3 L29.5 28.8 L33.9 20.0 L35.7 18.2 L37.9 17.3 L45.0 17.3" fill="none" stroke="#000" stroke-width="1"/></svg><div class="a sunkenb" style="left:461px;top:308px;width:54px;height:47px;"></div>
<span class="t" style="left:241.56px;top:290.00px;font-size:11px;letter-spacing:0.003px;"><u>Л</u>инейная</span>
<span class="t" style="left:352.56px;top:290.00px;font-size:11px;letter-spacing:-0.134px;">Ло<u>г</u>арифмическая</span>
<span class="t" style="left:460.56px;top:290.00px;font-size:11px;letter-spacing:-0.292px;"><u>П</u>олиномиальная</span>
<span class="t" style="left:241.56px;top:358.00px;font-size:11px;letter-spacing:0.073px;">С<u>т</u>епенная</span>
<span class="t" style="left:352.56px;top:358.00px;font-size:11px;letter-spacing:-0.111px;"><u>Э</u>кспоненциальная</span>
<span class="t" style="left:460.56px;top:358.00px;font-size:11px;letter-spacing:-0.067px;">Линейная <u>ф</u>ильтрация</span>
<span class="t" style="left:520.56px;top:252.00px;font-size:11px;letter-spacing:0.137px;color:#808080;">Степень:</span>
<span class="t" style="left:520.56px;top:322.00px;font-size:11px;letter-spacing:0.479px;color:#808080;">Точки:</span>
<div class="a sunkenb" style="left:521px;top:264px;width:59px;height:20px;background:#d4d0c8;"></div>
<span class="t" style="left:524.4px;top:269.00px;font-size:11px;">2</span>
<div class="a raised" style="left:562px;top:266px;width:16px;height:8px;"></div>
<div class="a raised" style="left:562px;top:274px;width:16px;height:8px;"></div>
<svg style="left:567px;top:268px" width="6" height="12" viewBox="0 0 6 12" shape-rendering="crispEdges"><path d="M2 0h1v1h-1zM1 1h3v1h-3zM0 2h5v1h-5z M0 8h5v1h-5zM1 9h3v1h-3zM2 10h1v1h-1z" fill="#808080"/><path d="M3 1h1v1h-1zM4 2h1v1h-1zM5 3h1v1h-1z M1 10h1v1h-1z M3 10h1v1h-1z" fill="#fff" opacity="0.0"/></svg>
<div class="a sunkenb" style="left:521px;top:334px;width:59px;height:20px;background:#d4d0c8;"></div>
<span class="t" style="left:524.4px;top:339.00px;font-size:11px;">2</span>
<div class="a raised" style="left:562px;top:336px;width:16px;height:8px;"></div>
<div class="a raised" style="left:562px;top:344px;width:16px;height:8px;"></div>
<svg style="left:567px;top:338px" width="6" height="12" viewBox="0 0 6 12" shape-rendering="crispEdges"><path d="M2 0h1v1h-1zM1 1h3v1h-3zM0 2h5v1h-5z M0 8h5v1h-5zM1 9h3v1h-3zM2 10h1v1h-1z" fill="#808080"/><path d="M3 1h1v1h-1zM4 2h1v1h-1zM5 3h1v1h-1z M1 10h1v1h-1z M3 10h1v1h-1z" fill="#fff" opacity="0.0"/></svg>
<span class="t" style="left:232.56px;top:384.00px;font-size:11px;letter-spacing:0.001px;">Построен на р<u>я</u>де:</span>
<!-- list box -->
<div class="a sunkenb" style="left:234px;top:398px;width:150px;height:56px;background:#fff;"></div>
<div class="a" style="left:236px;top:400px;width:130px;height:13px;background:#0a246a;"></div>
<span class="t" style="left:237px;top:402.00px;font-size:11px;color:#fff;">y</span>
<div class="a checker" style="left:366px;top:400px;width:16px;height:52px;"></div>
<div class="a raised" style="left:366px;top:400px;width:16px;height:16px;"></div>
<div class="a raised" style="left:366px;top:436px;width:16px;height:16px;"></div>
<svg style="left:370px;top:406px" width="8" height="4" viewBox="0 0 8 4" shape-rendering="crispEdges"><path d="M3 0h1v1h-1zM2 1h3v1h-3zM1 2h5v1h-5zM0 3h7v1h-7z" fill="#808080"/></svg>
<svg style="left:370px;top:442px" width="8" height="4" viewBox="0 0 8 4" shape-rendering="crispEdges"><path d="M0 0h7v1h-7zM1 1h5v1h-5zM2 2h3v1h-3zM3 3h1v1h-1z" fill="#808080"/></svg>
<!-- buttons -->
<div class="a" style="left:469px;top:538px;width:74px;height:22px;background:#000;"></div>
<div class="a raised" style="left:470px;top:539px;width:72px;height:20px;"></div>
<span class="t" style="left:497.06px;top:544.00px;font-size:11px;letter-spacing:-0.026px;">OK</span>
<div class="a raised" style="left:553px;top:538px;width:74px;height:22px;"></div>
<span class="t" style="left:569.56px;top:544.00px;font-size:11px;letter-spacing:-0.318px;">Отмена</span>
<!-- ===== Sheet tab strip + horizontal scrollbar ===== -->
<div class="a" style="left:2px;top:675px;width:1021px;height:16px;background:#d4d0c8;"></div>
<div class="a" style="left:2px;top:675px;width:61px;height:1px;background:#808080;"></div>
<div class="a" style="left:0;top:690px;width:1024px;height:2px;background:#fff;"></div>
<svg style="left:0;top:675px" width="620" height="16" viewBox="0 0 620 16">
  <g shape-rendering="crispEdges" fill="#000">
    <path d="M5 5h1v8h-1z M10 5h1v8h-1zM9 6h1v6h-1zM8 7h1v4h-1zM7 8h1v2h-1z"/>
    <path d="M25 5h1v8h-1zM24 6h1v6h-1zM23 7h1v4h-1zM22 8h1v2h-1z"/>
    <path d="M37 5h1v8h-1zM38 6h1v6h-1zM39 7h1v4h-1zM40 8h1v2h-1z"/>
    <path d="M52 5h1v8h-1zM53 6h1v6h-1zM54 7h1v4h-1zM55 8h1v2h-1z M57 5h1v8h-1z"/>
    <rect x="61" y="1" width="1" height="14" fill="#808080"/>
  </g>
  <!-- inactive tabs outline -->
  <path d="M146 0.5 H605" stroke="#808080" stroke-width="1" fill="none" shape-rendering="crispEdges"/>
  <path d="M63 14.5 H605" stroke="#808080" stroke-width="1" fill="none" shape-rendering="crispEdges"/>
  <!-- active tab -->
  <path d="M62.5 0 L69.5 14.5 H139.5 L146.5 0 Z" fill="#fff"/>
  <path d="M62.5 0.5 L69.5 14.5" fill="none" stroke="#000" stroke-width="1.2"/>
  <!-- dividers -->
  <g fill="none" stroke="#000" stroke-width="1.2">
    <path d="M146.7 0.7 L139.3 14.7 M142.7 8.7 L145.8 14.7"/>
    <path d="M318.7 0.7 L311.3 14.7 M314.7 8.7 L317.8 14.7"/>
    <path d="M492.7 0.7 L485.3 14.7 M488.7 8.7 L491.8 14.7"/>
  </g>
</svg>
<span class="t" style="left:70.52px;top:677.00px;font-size:12px;letter-spacing:0.011px;font-weight:bold;">Диаграмма</span>
<span class="t" style="left:157.56px;top:678.00px;font-size:11px;letter-spacing:-0.092px;">парная линейная регрессия</span>
<span class="t" style="left:327.06px;top:678.00px;font-size:11px;letter-spacing:0.034px;">итоги парной лин. регрессии</span>
<span class="t" style="left:501.06px;top:678.00px;font-size:11px;letter-spacing:0.022px;">множ. лин. регресси</span>
<!-- split box + h scrollbar -->
<div class="a" style="left:606px;top:676px;width:4px;height:14px;background:#d4d0c8;box-shadow:inset 1px 1px #fff,inset -1px -1px #808080;"></div>
<div class="a" style="left:610px;top:675px;width:1px;height:15px;background:#000;"></div>
<div class="a checker" style="left:612px;top:676px;width:395px;height:14px;"></div>
<div class="a" style="left:612px;top:676px;width:14px;height:14px;background:#d4d0c8;box-shadow:inset 1px 1px #fff,inset -1px -1px #808080;"></div>
<svg style="left:616px;top:679px" width="4" height="7" viewBox="0 0 4 7" shape-rendering="crispEdges"><path d="M3 0h1v7h-1zM2 1h1v5h-1zM1 2h1v3h-1zM0 3h1v1h-1z" fill="#000"/></svg>
<div class="a raised2" style="left:627px;top:676px;width:364px;height:14px;"></div>
<div class="a raised2" style="left:992px;top:676px;width:15px;height:14px;"></div>
<svg style="left:998px;top:679px" width="4" height="7" viewBox="0 0 4 7" shape-rendering="crispEdges"><path d="M0 0h1v7h-1zM1 1h1v5h-1zM2 2h1v3h-1zM3 3h1v1h-1z" fill="#000"/></svg>
<div class="a" style="left:1007px;top:675px;width:16px;height:15px;background:#d4d0c8;box-shadow:inset 1px 1px #404040;"></div>

<!-- ===== Drawing toolbar ===== -->
<div class="a" style="left:0;top:692px;width:1024px;height:27px;background:#d4d0c8;"></div>
<div class="a" style="left:0;top:694px;width:623px;height:24px;background:#dcd9d2;border-radius:0 3px 3px 0;"></div>
<div class="a grip" style="left:2px;top:698px;width:3px;height:16px;"></div>
<span class="t" style="left:9.56px;top:701.00px;font-size:11px;letter-spacing:0.094px;">Дейс<u>т</u>вия</span>
<svg style="left:62px;top:704px" width="5" height="3" viewBox="0 0 5 3" shape-rendering="crispEdges"><path d="M0 0h5v1h-5zM1 1h3v1h-3zM2 2h1v1h-1z" fill="#000"/></svg>
<svg style="left:79px;top:698px" width="10" height="16" viewBox="0 0 10 16"><path d="M0.5 0.5 V12.5 L3.5 9.5 L6 15 L7.8 14.2 L5.4 9 H9.2 Z" fill="#e4e2dc" stroke="#8c8c8c" stroke-width="1"/></svg>
<div class="a sep" style="left:97px;top:695px;height:22px;"></div>
<span class="t" style="left:103.06px;top:701.00px;font-size:11px;letter-spacing:0.254px;">Автофи<u>г</u>уры</span>
<svg style="left:171px;top:704px" width="5" height="3" viewBox="0 0 5 3" shape-rendering="crispEdges"><path d="M0 0h5v1h-5zM1 1h3v1h-3zM2 2h1v1h-1z" fill="#000"/></svg>
<svg style="left:0;top:694px" width="624" height="24" viewBox="0 694 624 24">
  <g stroke="#8c8c8c" fill="none" stroke-width="1">
    <path d="M186 700 L197 711"/>
    <path d="M210 700 L219 709"/><path d="M221 711 L214.5 708.5 L218.5 704.5 Z" fill="#8c8c8c"/>
    <rect x="230.5" y="699.5" width="15" height="12"/>
    <ellipse cx="260.5" cy="705.5" rx="7.5" ry="5.5"/>
    <rect x="276.5" y="698.5" width="15" height="14"/>
    <path d="M279 703.5H289 M279 706.5H289 M279 708.5H289 M279 710.5H289 M282 701.5H286" />
    <path d="M299 708 L310 698 L313 698 L313 713 L303 713 L303 710 Z" fill="#8c8c8c"/>
    <circle cx="330" cy="705.5" r="5.5" stroke-dasharray="4 4.6" stroke-width="1.6"/>
    <rect x="346.5" y="698.5" width="14" height="14"/>
    <path d="M349 712 C349 708 352 708 353 706 C351 704 352 701 354 701 C357 701 357 704 355.5 706 C357 708 359 708 359 712 Z" fill="#8c8c8c"/>
  </g>
  <rect x="369.5" y="698.5" width="14" height="14" fill="#f6f08a" stroke="#555" stroke-width="1"/>
  <path d="M370 712 L375 705 L378 709 L380 707 L383 712 Z" fill="#8a8a8a" stroke="#555" stroke-width="0.6"/>
  <circle cx="380" cy="702" r="1.5" fill="#8a8a8a" stroke="#555" stroke-width="0.5"/>
</svg>
<div class="a sep" style="left:390px;top:695px;height:22px;"></div>
<!-- fill colour -->
<svg style="left:397px;top:697px" width="17" height="17" viewBox="0 0 17 17">
  <path d="M3 8 L8 3 L13 8 L8 13 Z" fill="#f4f4f4" stroke="#444" stroke-width="1"/><path d="M8 8 L10.500 5.500 L13 8 L8 13 L6.500 11.500 Z" fill="#a8a8a8"/>
  <path d="M5 5.5 C4 1 8.5 0.5 8.5 4.5 V8" fill="none" stroke="#3a46b8" stroke-width="1.2"/>
  <path d="M12 6 C14 6.5 14.5 9 13.5 11.5 C12.5 10 12.5 8 12 6Z" fill="#3a46b8" stroke="#3a46b8" stroke-width="0.8"/>
  <rect x="0" y="13" width="16" height="4" fill="#ffff00"/>
</svg>
<svg style="left:419px;top:705px" width="5" height="3" viewBox="0 0 5 3" shape-rendering="crispEdges"><path d="M0 0h5v1h-5zM1 1h3v1h-3zM2 2h1v1h-1z" fill="#000"/></svg>
<!-- line colour -->
<svg style="left:431px;top:697px" width="17" height="17" viewBox="0 0 17 17">
  <path d="M5 10 C7 8 10 5 13.5 1.5 L15 3 C12 6.5 9 9.5 7 11.5 Z" fill="#3a46b8"/>
  <path d="M13 1 L15.5 0.5 L15.5 3 Z" fill="#e8c840"/>
  <path d="M2 11.5 C3.5 10 5 10 6.5 11.5 L4 12.5 Z" fill="#3a46b8"/>
  <rect x="0" y="13" width="16" height="4" fill="#ff00ff"/>
</svg>
<svg style="left:453px;top:705px" width="5" height="3" viewBox="0 0 5 3" shape-rendering="crispEdges"><path d="M0 0h5v1h-5zM1 1h3v1h-3zM2 2h1v1h-1z" fill="#000"/></svg>
<!-- font colour -->
<span class="t" style="left:465.5px;top:696.00px;font-size:16px;font-family:'Liberation Serif',serif;font-weight:bold;color:#3a46b8;">A</span>
<div class="a" style="left:465px;top:710px;width:16px;height:4px;background:#ff0000;"></div>
<svg style="left:487px;top:705px" width="5" height="3" viewBox="0 0 5 3" shape-rendering="crispEdges"><path d="M0 0h5v1h-5zM1 1h3v1h-3zM2 2h1v1h-1z" fill="#000"/></svg>
<!-- line style, dash style, arrow style, shadow, 3-D -->
<svg style="left:0;top:694px" width="624" height="24" viewBox="0 694 624 24">
  <g shape-rendering="crispEdges">
    <rect x="499" y="700" width="15" height="2" fill="#404040"/><rect x="499" y="704" width="15" height="2" fill="#404040"/><rect x="499" y="708" width="15" height="2" fill="#404040"/>
    <path d="M522 701H537" stroke="#606060" stroke-width="1" stroke-dasharray="1 1"/>
    <path d="M522 704.5H537" stroke="#606060" stroke-width="1" stroke-dasharray="3 1"/>
    <path d="M522 708.5H537" stroke="#606060" stroke-width="1" stroke-dasharray="2 2"/>
  </g>
  <g stroke="#404040" stroke-width="1.3" fill="none">
    <path d="M546 702.5H561 M558 700 L561 702.5 L558 705"/>
    <path d="M546 709.5H561 M549 707 L546 709.5 L549 712 M558 707 L561 709.5 L558 712"/>
  </g>
  <rect x="571" y="701" width="11" height="11" fill="#404040"/>
  <rect x="569" y="699" width="11" height="11" fill="#4aa8a8" stroke="#2a6868" stroke-width="1"/>
  <path d="M591.5 703.500 L596.500 698.500 H606.500 V708.500 L601.500 713.500 H591.500 Z" fill="#f4f4f4" stroke="#707070" stroke-width="1"/>
  <path d="M601.500 703.500 L606.500 698.500 V708.500 L601.500 713.500 Z" fill="#d8d8d8" stroke="#707070" stroke-width="1"/>
  <rect x="591.500" y="703.500" width="10" height="10" fill="#4aa8a8" stroke="#3a7878" stroke-width="1"/>
  <path d="M614 710h5v1h-5zM615 711h3v1h-3zM616 712h1v1h-1z" fill="#000" shape-rendering="crispEdges"/>
</svg>

<!-- ===== Status bar ===== -->
<div class="a" style="left:624px;top:718px;width:400px;height:1px;background:#808080;"></div>
<div class="a" style="left:0;top:719px;width:1024px;height:1px;background:#fff;"></div>
<div class="a" style="left:0;top:720px;width:1024px;height:19px;background:#d4d0c8;"></div>
<span class="t" style="left:4.06px;top:725.00px;font-size:11px;letter-spacing:0.582px;">Готово</span>
<div class="a sunk1" style="left:698px;top:722px;width:34px;height:16px;opacity:.4"></div>
<div class="a sunk1" style="left:734px;top:722px;width:111px;height:16px;opacity:.4"></div>
<div class="a sunk1" style="left:847px;top:722px;width:25px;height:16px;opacity:.4"></div>
<div class="a sunk1" style="left:874px;top:722px;width:29px;height:16px;opacity:.4"></div>
<div class="a sunk1" style="left:905px;top:722px;width:26px;height:16px;opacity:.4"></div>
<div class="a sunk1" style="left:933px;top:722px;width:27px;height:16px;opacity:.4"></div>
<div class="a sunk1" style="left:962px;top:722px;width:26px;height:16px;opacity:.4"></div>
<div class="a sunk1" style="left:990px;top:722px;width:30px;height:16px;opacity:.4"></div>
<!-- ===== Windows taskbar ===== -->
<div class="a" style="left:0;top:739px;width:1024px;height:29px;background:#d4d0c8;"></div>
<div class="a" style="left:0;top:739px;width:1024px;height:1px;background:#fff;"></div>
<!-- start button -->
<div class="a raised" style="left:2px;top:742px;width:51px;height:22px;"></div>
<svg style="left:4px;top:744px" width="16" height="16" viewBox="0 0 16 16">
  <path d="M2 2.5 C4 1 5.5 1.5 7 2.5 L6 7 C4.5 6 3 6 1 7 Z" fill="#f07020"/>
  <path d="M8 2.8 C9.5 4 11.5 4 14 2.5 L13 7 C11 8.5 9 8 7 7.2 Z" fill="#78c828"/>
  <path d="M0.8 8 C3 7 4.5 7.2 5.8 8 L4.8 12.8 C3.2 12 1.8 12 0 13 Z" fill="#3a70e0"/>
  <path d="M6.8 8.3 C8.5 9.5 10.5 9.5 12.8 8 L11.8 12.8 C9.8 14.2 7.8 14 5.8 13 Z" fill="#f8c810"/>
</svg>
<span class="t" style="left:21px;top:747.00px;font-size:12.5px;letter-spacing:-0.115px;font-weight:bold;">Пуск</span>
<!-- task buttons -->
<div class="a raised" style="left:58px;top:742px;width:160px;height:22px;"></div>
<svg style="left:62px;top:745px" width="16" height="15" viewBox="0 0 16 15">
  <path d="M0.5 13.5 V2.5 Q0.5 1.5 1.5 1.5 H5.5 L7 3.5 H13.5 Q14.5 3.5 14.5 4.5 V13.5 Z" fill="#f4d868" stroke="#9a7a18" stroke-width="1"/>
  <path d="M0.5 13.5 V6.5 Q0.5 5.5 1.5 5.5 H14.5 Q15.5 5.5 15.5 6.5 V13.5 Z" fill="#fcec9c" stroke="#9a7a18" stroke-width="1"/>
</svg>
<span class="t" style="left:81.06px;top:748.00px;font-size:11px;letter-spacing:-0.198px;">ЗО</span>
<div class="a raised" style="left:221px;top:742px;width:160px;height:22px;"></div>
<svg style="left:225px;top:745px" width="17" height="16" viewBox="0 0 17 16" shape-rendering="crispEdges">
  <path d="M4.5 0.5 H12.5 L15.5 3.5 V15.5 H4.5 Z" fill="#fff" stroke="#000"/><path d="M12.5 0.5 V3.5 H15.5" fill="none" stroke="#000"/>
  <rect x="0.5" y="2.5" width="10" height="9" fill="#1a2ab8" stroke="#0a1470"/>
  <rect x="2" y="4" width="7" height="6" fill="#dfe4ff"/>
</svg>
<span class="t" style="left:228px;top:748px;font-size:8px;font-weight:bold;color:#0a1470;">W</span>
<span class="t" style="left:244.06px;top:748.00px;font-size:11px;letter-spacing:0.109px;">Методика в 3 - Microsof...</span>
<div class="a raised" style="left:384px;top:742px;width:160px;height:22px;"></div>
<svg style="left:388px;top:745px" width="17" height="16" viewBox="0 0 17 16" shape-rendering="crispEdges">
  <path d="M4.5 0.5 H12.5 L15.5 3.5 V15.5 H4.5 Z" fill="#fff" stroke="#000"/><path d="M12.5 0.5 V3.5 H15.5" fill="none" stroke="#000"/>
  <rect x="0.5" y="2.5" width="10" height="9" fill="#1a2ab8" stroke="#0a1470"/>
  <rect x="2" y="4" width="7" height="6" fill="#dfe4ff"/>
</svg>
<span class="t" style="left:391px;top:748px;font-size:8px;font-weight:bold;color:#0a1470;">W</span>
<span class="t" style="left:407.06px;top:748.00px;font-size:11px;letter-spacing:0.058px;">Эконометрика_пособие...</span>
<div class="a raised" style="left:547px;top:742px;width:160px;height:22px;"></div>
<svg style="left:551px;top:745px" width="17" height="16" viewBox="0 0 17 16" shape-rendering="crispEdges">
  <path d="M4.5 0.5 H12.5 L15.5 3.5 V15.5 H4.5 Z" fill="#fff" stroke="#000"/><path d="M12.5 0.5 V3.5 H15.5" fill="none" stroke="#000"/>
  <path d="M10 6h4M10 8h4M10 10h4M6 13h8" stroke="#9a9a9a"/>
  <rect x="0.5" y="2.5" width="9" height="9" fill="#0c8a0c" stroke="#064f06"/>
  <rect x="1.5" y="3.5" width="7" height="7" fill="none" stroke="#bfe6bf"/>
  <path d="M3 5 L7 9 M7 5 L3 9" stroke="#fff" stroke-width="1.4" shape-rendering="auto"/>
</svg>
<span class="t" style="left:570.06px;top:748.00px;font-size:11px;letter-spacing:-0.260px;">пример 2</span>
<!-- active (pressed) button -->
<div class="a checker" style="left:710px;top:742px;width:160px;height:22px;box-shadow:inset 1px 1px #404040,inset -1px -1px #fff,inset 2px 2px #808080,inset -2px -2px #d4d0c8;"></div>
<svg style="left:715px;top:746px" width="17" height="16" viewBox="0 0 17 16" shape-rendering="crispEdges">
  <path d="M4.5 0.5 H12.5 L15.5 3.5 V15.5 H4.5 Z" fill="#fff" stroke="#000"/><path d="M12.5 0.5 V3.5 H15.5" fill="none" stroke="#000"/>
  <path d="M10 6h4M10 8h4M10 10h4M6 13h8" stroke="#9a9a9a"/>
  <rect x="0.5" y="2.5" width="9" height="9" fill="#0c8a0c" stroke="#064f06"/>
  <rect x="1.5" y="3.5" width="7" height="7" fill="none" stroke="#bfe6bf"/>
  <path d="M3 5 L7 9 M7 5 L3 9" stroke="#fff" stroke-width="1.4" shape-rendering="auto"/>
</svg>
<span class="t" style="left:734.06px;top:748.00px;font-size:11px;letter-spacing:0.157px;font-weight:bold;">пример 1</span>
<!-- language indicator -->
<div class="a" style="left:892px;top:745px;width:13px;height:16px;background:#0a246a;overflow:hidden;"></div>
<div class="a" style="left:892px;top:745px;width:13px;height:16px;overflow:hidden;"><span class="t" style="left:0.56px;top:3.00px;font-size:11px;letter-spacing:-0.401px;color:#fff;">EN</span></div>
<!-- tray -->
<div class="a sunk1" style="left:909px;top:742px;width:113px;height:22px;"></div>
<svg style="left:914px;top:751px" width="8" height="7" viewBox="0 0 8 7" shape-rendering="crispEdges">
  <path d="M2 0h2v1h-2zM1 1h2v1h-2zM0 2h2v1h-2zM1 3h2v1h-2zM2 4h2v1h-2z M6 0h2v1h-2zM5 1h2v1h-2zM4 2h2v1h-2zM5 3h2v1h-2zM6 4h2v1h-2z" fill="#000" transform="translate(0 1)"/>
</svg>
<svg style="left:927px;top:745px" width="16" height="17" viewBox="0 0 16 17">
  <path d="M8 0.5 C10 2 12.5 2.5 15 2.5 C15 9 13 13.5 8 16.5 C3 13.5 1 9 1 2.5 C3.5 2.5 6 2 8 0.5 Z" fill="#c8ccd8" stroke="#5a68a8" stroke-width="1"/>
  <path d="M8 2.5 C9.5 3.5 11.5 4 13.2 4 C13 9 11.5 12 8 14.3 C4.500 12 3 9 2.800 4 C4.500 4 6.500 3.500 8 2.500 Z" fill="#e02020"/>
  <path d="M5.8 5.8 L10.2 10.2 M10.2 5.8 L5.8 10.2" stroke="#fff" stroke-width="1.6"/>
</svg>
<svg style="left:945px;top:745px" width="16" height="17" viewBox="0 0 16 17" shape-rendering="crispEdges">
  <rect x="1" y="0" width="14" height="12" fill="#404040"/>
  <rect x="3" y="1" width="11" height="9" fill="#8a8a8a"/>
  <rect x="2" y="13" width="12" height="1" fill="#404040"/>
  <rect x="2" y="14" width="4" height="2" fill="#404040"/><rect x="10" y="14" width="4" height="2" fill="#404040"/>
</svg>
<svg style="left:963px;top:745px" width="16" height="17" viewBox="0 0 16 17">
  <rect x="0" y="0.5" width="15.5" height="16" rx="2" fill="#800080"/>
  <circle cx="8.5" cy="8.5" r="4.2" fill="#fff"/>
  <rect x="12" y="0.5" width="3.500" height="16" fill="#800080"/>
</svg>
<span class="t" style="left:985.56px;top:748.00px;font-size:11px;letter-spacing:0.087px;">14:57</span>
</body>
</html>
